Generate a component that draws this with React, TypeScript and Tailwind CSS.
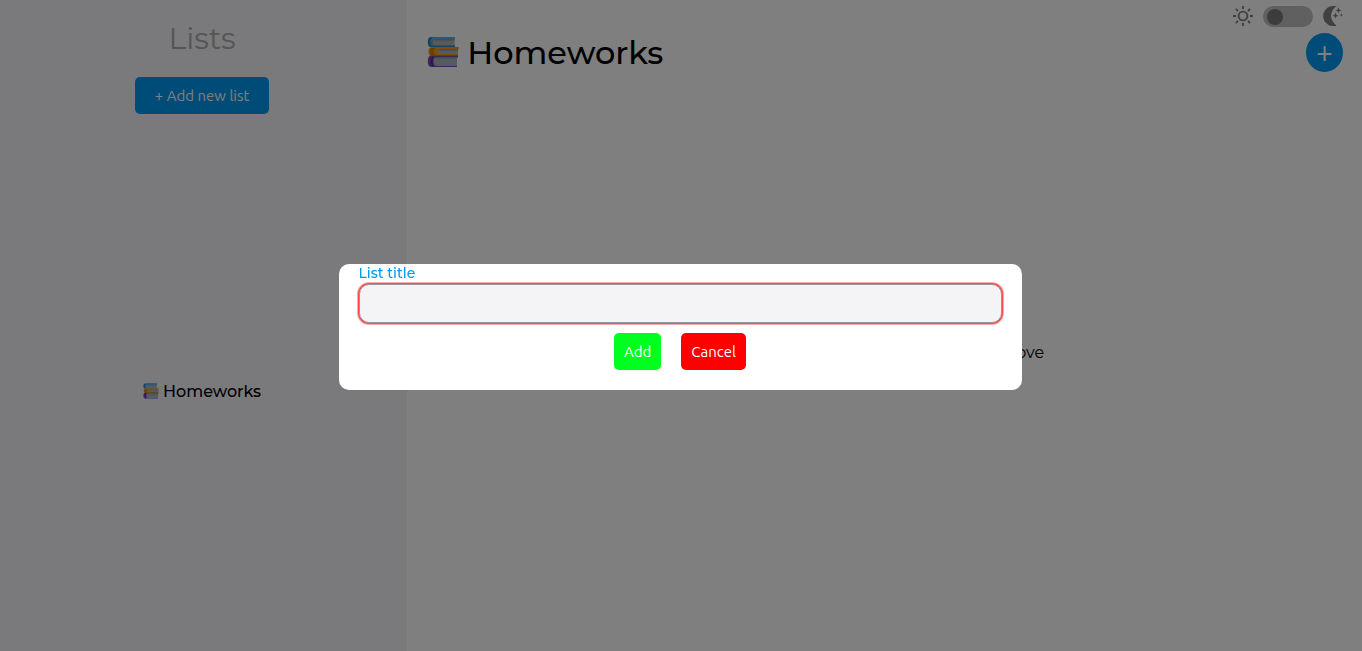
import React from "react";

function Books({ className }: { className: string }) {
  return (
    <svg viewBox="0 0 32 32" className={className} aria-hidden="true">
      <path d="M4 1h24v2H7v6h21v2H4C1.500 11 .8 9 .8 6S1.500 1 4 1Z" fill="#2e86c1" />
      <path d="M7 3h20.500v6.500H7c-2-1-2-5.500 0-6.500Z" fill="#a9b8c2" />
      <path d="M6 3h21.500v1.500H6Z" fill="#8497a3" />
      <path d="M6 1h22v2H7C5 4 5 9 7 10H5C3 8 3 3 6 1Z" fill="#5aaee8" />
      <path d="M4 11h28v2H13v5h18v2H4c-2-1-2.500-2.500-2.500-4.500S2 12 4 11Z" fill="#f5a018" />
      <path d="M12 13h19v5H12c-1.500-1-1.500-4 0-5Z" fill="#a9b8c2" />
      <path d="M12 13h19v1.500H12Z" fill="#8497a3" />
      <path d="M4 12c-1.500 1.500-1.500 5 0 7h4c-2-2-2-5 0-7Z" fill="#db7d00" />
      <path d="M3 19.500h28v2H8v8h22v1.500H4c-2.500-.5-3.200-2.500-3.200-5.500s.7-5 2.200-6Z" fill="#7e4bb5" />
      <path d="M8 21h22v8.500H8c-2-1.500-2-6.500 0-8.500Z" fill="#a9b8c2" />
      <path d="M8 21h22v1.500H8Z" fill="#8497a3" />
      <path d="M5 20.500c-2 2-2 8 0 10h2c-2-2-2-7 0-10Z" fill="#5e3196" />
    </svg>
  );
}

function Sun() {
  return (
    <svg viewBox="0 0 20 20" className="size-5" fill="none" stroke="#808080" strokeWidth="1.900" aria-hidden="true">
      <circle cx="10" cy="10" r="4.400" />
      <path d="M10 0v3M10 17v3M0 10h3M17 10h3M2.900 2.900 5 5M15 15l2.100 2.100M2.900 17.100 5 15M15 5l2.100-2.100" />
    </svg>
  );
}

function Moon() {
  return (
    <svg viewBox="0 0 20 20" className="size-5" fill="#808080" aria-hidden="true">
      <path d="M10 0h3.600A12.500 12.500 0 0 0 8 10a12.500 12.500 0 0 0 5.600 9.400A10 10 0 1 1 10 0Z" />
      <path d="m15.500 1.500.9 2 2 .9-2 .9-.9 2-.9-2-2-.9 2-.9ZM12.500 6.800l.9 2 2 .9-2 .9-.9 2-.9-2-2-.9 2-.9ZM18.300 7.300l.5 1.200 1.200.5-1.200.5-.5 1.200-.5-1.200-1.200-.5 1.200-.5Z" />
    </svg>
  );
}

export default function App() {
  return (
    <div className="flex min-h-screen bg-white font-['Montserrat','Inter',sans-serif] text-black">
      <aside className="flex w-[29.9%] flex-col items-center bg-[#f4f4f8] pr-[3px]">
        <h2 className="mt-[21px] text-[30px] leading-9 font-normal text-[#aaaaaa]">Lists</h2>
        <button
          type="button"
          className="mt-5 h-[37px] rounded-[5px] bg-[#0098f0] px-5 pt-0.5 font-['Ubuntu','Noto_Sans',sans-serif] text-[15px] text-white"
        >
          + Add new list
        </button>
        <ul className="mt-[18px] flex flex-1 flex-col justify-center">
          <li>
            <a href="#homeworks" className="flex items-center gap-1 text-base font-medium">
              <Books className="mb-0.5 size-4" />
              Homeworks
            </a>
          </li>
        </ul>
      </aside>

      <main className="flex flex-1 flex-col pr-[19px] pl-5">
        <div className="mt-1.5 -mb-1.5 flex h-[21px] items-start justify-end gap-2.5">
          <Sun />
          <label className="flex h-[21px] w-[50px] items-center rounded-full bg-[#c0c0c0] px-1">
            <input type="checkbox" aria-label="Dark mode" className="size-4 appearance-none rounded-full bg-[#787878]" />
          </label>
          <Moon />
        </div>
        <header className="mt-3 flex items-start justify-between">
          <h1 className="flex items-center gap-2 text-[32px] leading-[39px] font-medium">
            <Books className="mb-0.5 size-8" />
            Homeworks
          </h1>
          <button
            type="button"
            className="flex h-[39px] w-[37px] items-center justify-center rounded-[50%] bg-[#0098f0] pb-0.5 font-['Ubuntu','Noto_Sans',sans-serif] text-[30px] text-white"
          >
            +
          </button>
        </header>
        <p className="flex flex-1 items-center justify-center pr-1.5 pb-[18px] text-base">
          Create a new task with the button above
        </p>
      </main>

      <div className="fixed inset-0 flex items-center justify-center bg-black/50 pt-[3px] pr-0.5">
        <form
          role="dialog"
          aria-label="Add new list"
          onSubmit={(event: React.FormEvent) => event.preventDefault()}
          className="flex w-[calc(50%+3px)] flex-col rounded-[10px] bg-white px-5 pb-5"
        >
          <label htmlFor="list-title" className="pb-0.5 text-[14px] leading-[18px] font-medium text-[#0098f0]">
            List title
          </label>
          <input
            id="list-title"
            type="text"
            className="h-[39px] rounded-[10px] border border-[#999999] bg-[#f4f4f7] px-2.5 shadow-[0_0_0_1px_#ff4a4a,0_0_0_2px_#ffaaaa] outline-none"
          />
          <div className="mt-2.5 flex justify-center gap-5 font-['Ubuntu','Noto_Sans',sans-serif] text-[15px] text-white">
            <button type="submit" className="h-[37px] rounded-[5px] bg-[#00ff1e] px-2.5 pt-0.5">
              Add
            </button>
            <button type="button" className="h-[37px] rounded-[5px] bg-[#ff0000] px-2.5 pt-0.5">
              Cancel
            </button>
          </div>
        </form>
      </div>
    </div>
  );
}
